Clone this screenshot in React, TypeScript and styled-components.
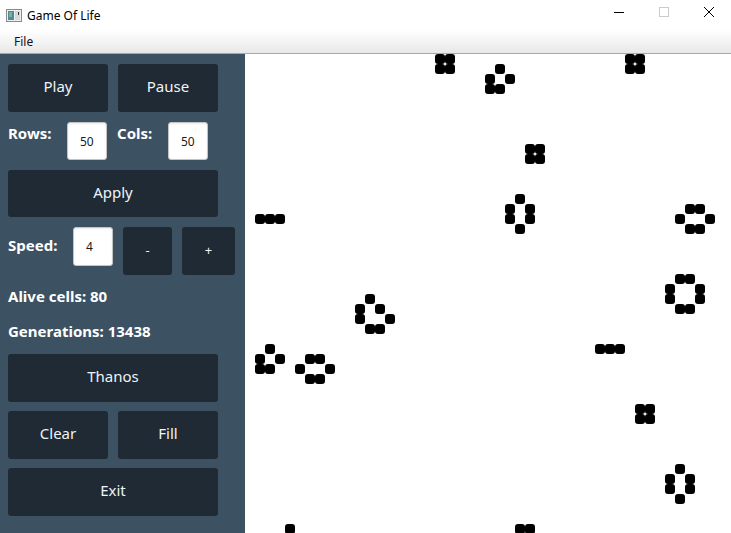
import React from "react";
import styled, { createGlobalStyle } from "styled-components";

const GlobalStyle = createGlobalStyle`
  html, body {
    margin: 0;
    padding: 0;
    background: #ffffff;
  }
  * {
    box-sizing: border-box;
  }
`;

const CELL = 10;
const GRID = 50;

// still lifes and oscillators left on the board after many generations
const CELLS: [number, number][] = [
  [19, 0], [20, 0], [19, 1], [20, 1],
  [25, 1], [24, 2], [26, 2], [24, 3], [25, 3],
  [38, 0], [39, 0], [38, 1], [39, 1],
  [28, 9], [29, 9], [28, 10], [29, 10],
  [27, 14], [26, 15], [28, 15], [26, 16], [28, 16], [27, 17],
  [1, 16], [2, 16], [3, 16],
  [44, 15], [45, 15], [43, 16], [46, 16], [44, 17], [45, 17],
  [43, 22], [44, 22], [42, 23], [45, 23], [42, 24], [45, 24], [43, 25], [44, 25],
  [12, 24], [11, 25], [13, 25], [11, 26], [14, 26], [12, 27], [13, 27],
  [2, 29], [1, 30], [3, 30], [1, 31], [2, 31],
  [6, 30], [7, 30], [5, 31], [8, 31], [6, 32], [7, 32],
  [35, 29], [36, 29], [37, 29],
  [39, 35], [40, 35], [39, 36], [40, 36],
  [43, 41], [42, 42], [44, 42], [42, 43], [44, 43], [43, 44],
  [4, 47], [4, 48], [4, 49],
  [27, 47], [28, 47], [27, 48], [28, 48],
  [49, 5], [49, 6],
];

const App = () => {
  return (
    <>
      <GlobalStyle />
      <Window>
        <TitleBar>
          <AppIcon />
          <Title>Game Of Life</Title>
          <Controls>
            <ControlButton>
              <svg width="10" height="10" viewBox="0 0 10 10">
                <line x1="0" y1="5.5" x2="10" y2="5.5" stroke="#000" strokeWidth="1" />
              </svg>
            </ControlButton>
            <ControlButton>
              <svg width="10" height="10" viewBox="0 0 10 10">
                <rect x="0.5" y="0.5" width="9" height="9" fill="none" stroke="#cccccc" strokeWidth="1" />
              </svg>
            </ControlButton>
            <ControlButton>
              <svg width="10" height="10" viewBox="0 0 10 10">
                <path d="M0 0 L10 10 M10 0 L0 10" stroke="#000" strokeWidth="1" />
              </svg>
            </ControlButton>
          </Controls>
        </TitleBar>
        <MenuBar>
          <MenuItem>File</MenuItem>
        </MenuBar>
        <Body>
          <Sidebar>
            <Row>
              <Button $w={100}>Play</Button>
              <Button $w={100}>Pause</Button>
            </Row>
            <FieldRow>
              <Label $w={49}>Rows:</Label>
              <Field defaultValue="50" />
              <Label $w={41}>Cols:</Label>
              <Field defaultValue="50" />
            </FieldRow>
            <Button $w={210} $h={47}>
              Apply
            </Button>
            <FieldRow>
              <Label $w={55} $top={8}>
                Speed:
              </Label>
              <Field defaultValue="4" $h={39} />
              <Button $w={49} $small>
                -
              </Button>
              <Button $w={53} $small>
                +
              </Button>
            </FieldRow>
            <Stats>
              <Stat>Alive cells: 80</Stat>
              <Stat>Generations: 13438</Stat>
            </Stats>
            <Stack>
              <Button $w={210}>Thanos</Button>
              <Row>
                <Button $w={100}>Clear</Button>
                <Button $w={100}>Fill</Button>
              </Row>
              <Button $w={210}>Exit</Button>
            </Stack>
          </Sidebar>
          <Board>
            <svg width={GRID * CELL} height={GRID * CELL}>
              {CELLS.map(([c, r], i) => (
                <rect
                  key={i}
                  x={c * CELL}
                  y={r * CELL}
                  width={CELL}
                  height={CELL}
                  rx={3}
                  fill="#000"
                />
              ))}
            </svg>
          </Board>
        </Body>
      </Window>
    </>
  );
};

const AppIcon = () => (
  <svg width="16" height="13" viewBox="0 0 16 13">
    <rect x="0.5" y="0.5" width="15" height="12" fill="#f0f0f0" stroke="#8a8a8a" />
    <rect x="2" y="2" width="6" height="9" fill="#4c8a9c" />
    <rect x="3" y="3" width="3" height="5" fill="#7fb08a" />
    <rect x="9" y="2" width="5" height="9" fill="#d8d8d8" />
    <rect x="12" y="3" width="1" height="3" fill="#333" />
  </svg>
);

const Window = styled.div`
  width: 731px;
  height: 533px;
  display: flex;
  flex-direction: column;
  overflow: hidden;
  font-family: "Noto Sans", "Open Sans", sans-serif;
`;

const TitleBar = styled.div`
  height: 30px;
  flex: none;
  display: flex;
  align-items: center;
  padding-left: 6px;
  background: #ffffff;
  svg {
    display: block;
  }
`;

const Title = styled.span`
  margin-left: 5px;
  font-size: 12px;
  color: #000;
  flex: 1;
`;

const Controls = styled.div`
  display: flex;
  align-self: stretch;
`;

const ControlButton = styled.div`
  width: 45px;
  display: flex;
  align-items: center;
  justify-content: center;
  padding-bottom: 6px;
`;

const MenuBar = styled.div`
  height: 24px;
  flex: none;
  display: flex;
  align-items: center;
  padding-left: 14px;
  background: linear-gradient(#ffffff, #e8e8e8);
  border-bottom: 1px solid #a7a7a7;
`;

const MenuItem = styled.span`
  font-size: 12px;
  color: #111;
`;

const Body = styled.div`
  flex: 1;
  display: flex;
  min-height: 0;
`;

const Sidebar = styled.div`
  width: 245px;
  flex: none;
  display: flex;
  flex-direction: column;
  gap: 10px;
  padding: 10px 10px 0 8px;
  background: #3c5162;
`;

const Row = styled.div`
  display: flex;
  gap: 10px;
`;

const FieldRow = styled.div`
  display: flex;
  align-items: flex-start;
  gap: 10px;
`;

const Stack = styled.div`
  display: flex;
  flex-direction: column;
  gap: 9px;
`;

const Button = styled.div<{ $w: number; $h?: number; $small?: boolean }>`
  width: ${({ $w }) => $w}px;
  height: ${({ $h }) => $h || 48}px;
  flex: none;
  display: flex;
  align-items: center;
  justify-content: center;
  padding-bottom: ${({ $small }) => ($small ? "2px" : "4px")};
  background: #1f2a34;
  border-radius: 3px;
  color: #eef4f8;
  font-size: ${({ $small }) => ($small ? "13px" : "15px")};
`;

const Label = styled.span<{ $w: number; $top?: number }>`
  width: ${({ $w }) => $w}px;
  flex: none;
  padding-top: ${({ $top }) => $top ?? 1}px;
  font-size: 15px;
  line-height: 20px;
  font-weight: 700;
  color: #ffffff;
`;

const Field = styled.input<{ $h?: number }>`
  width: 40px;
  height: ${({ $h }) => $h || 38}px;
  flex: none;
  padding: 0 0 0 12px;
  border: 1px solid #c4c4c4;
  border-radius: 3px;
  background: #ffffff;
  box-shadow: inset 0 1px 2px rgba(0, 0, 0, 0.08);
  font-family: "Noto Sans", "Open Sans", sans-serif;
  font-size: 12px;
  color: #1a1a1a;
  outline: none;
`;

const Stats = styled.div`
  display: flex;
  flex-direction: column;
  gap: 15px;
  padding: 1px 0 3px;
`;

const Stat = styled.div`
  font-size: 15px;
  line-height: 20px;
  font-weight: 700;
  color: #ffffff;
`;

const Board = styled.div`
  flex: 1;
  background: #ffffff;
  overflow: hidden;
  svg {
    display: block;
  }
`;

export default App;
